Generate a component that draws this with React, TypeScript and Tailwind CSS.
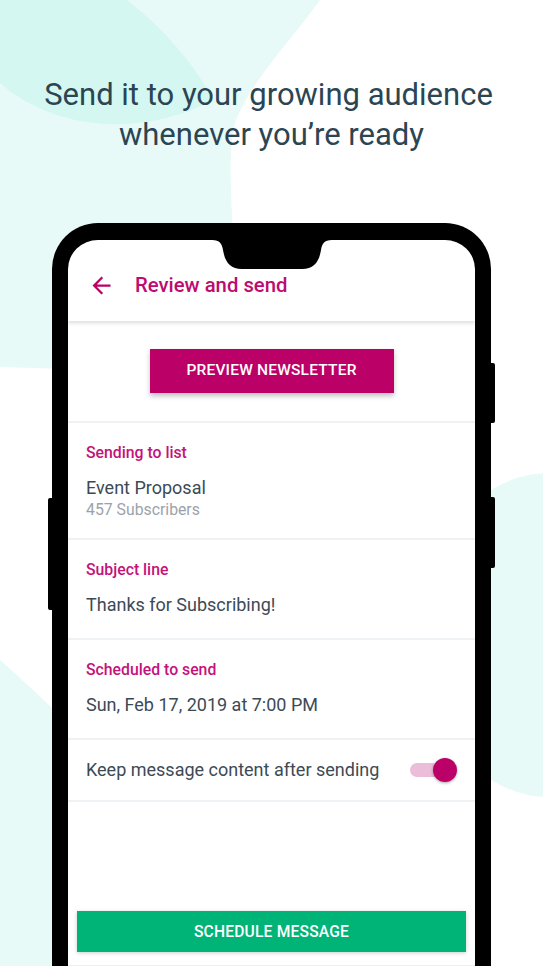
const PINK = "#bb0068";

function Section({ label, value, sub }: { label: string; value: string; sub?: string }) {
  return (
    <div className={`border-b-2 border-[#eef2f5] px-[18px] pt-[20px] ${sub ? "pb-[18px]" : "pb-[21px]"}`}>
      <p className="text-[15.8px] font-medium leading-[20px] text-[#c4127a]">{label}</p>
      <p className="mt-[13px] text-[18px] leading-[24px] text-[#3c4a55]">{value}</p>
      {sub ? <p className="text-[15.8px] leading-[20px] text-[#9aa3ab]">{sub}</p> : null}
    </div>
  );
}

export default function App() {
  return (
    <div
      className="relative h-[966px] w-[543px] overflow-hidden bg-white"
      style={{ fontFamily: "Roboto, 'Noto Sans', sans-serif" }}
    >
      {/* background blobs */}
      <svg className="absolute left-0 top-0" width="543" height="966" viewBox="0 0 543 966">
        <path d="M0 0 H320 C290 42 252 80 236 120 C226 150 232 220 238 300 L240 374 L0 367 Z" fill="#e7faf8" />
        <path d="M0 0 H127 C165 30 195 65 213 100 C180 118 140 126 105 124 C60 121 25 105 0 83 Z" fill="#d5f7f1" />
        <rect x="440" y="473" width="300" height="324" rx="110" fill="#e7faf8" />
        <path d="M0 660 C20 678 40 696 60 716 L60 966 L0 966 Z" fill="#e7faf8" />
      </svg>

      <h1 className="relative pt-[75px] text-center text-[31px] leading-[40px] text-[#2b4553]">
        <span className="mr-[6px]">Send it to your growing audience</span>
        <br />
        whenever you’re ready
      </h1>

      {/* phone */}
      <div className="relative ml-[52px] mt-[68px] h-[760px] w-[439px] rounded-t-[46px] border-x-[16px] border-t-[17px] border-black bg-white">
        {/* side buttons */}
        <div className="absolute left-[-20px] top-[258px] h-[112px] w-[5px] rounded-l-[2px] bg-black" />
        <div className="absolute right-[-20px] top-[123px] h-[60px] w-[5px] rounded-r-[2px] bg-black" />
        <div className="absolute right-[-20px] top-[257px] h-[71px] w-[5px] rounded-r-[2px] bg-black" />

        {/* notch */}
        <svg className="absolute left-1/2 top-0 z-10 -translate-x-1/2" width="120" height="29" viewBox="0 0 120 29">
          <path d="M0 0 H120 C112 0 110 4 109 10 C107 22 102 29 90 29 H30 C18 29 13 22 11 10 C10 4 8 0 0 0 Z" fill="#000" />
        </svg>

        <div className="flex h-full flex-col overflow-hidden rounded-t-[30px]">
          {/* app bar */}
          <div className="flex h-[81px] items-center pl-[20px] pt-[9px] shadow-[0_2px_4px_rgba(0,0,0,0.14)]">
            <svg width="27" height="27" viewBox="0 0 24 24">
              <path d="M20 11H7.83l5.59-5.59L12 4l-8 8 8 8 1.41-1.41L7.83 13H20v-2z" fill={PINK} />
            </svg>
            <span className="ml-[20px] text-[20.3px] font-medium text-[#bd0b70]">Review and send</span>
          </div>

          <div className="border-b-2 border-[#eef2f5] pb-[28px] pt-[28px]">
            <button className="mx-auto flex h-[44px] w-[244px] items-center justify-center bg-[#bb0068] text-[15.5px] font-medium tracking-[0.2px] text-white shadow-[0_3px_5px_rgba(0,0,0,0.25)]">
              PREVIEW NEWSLETTER
            </button>
          </div>

          <Section label="Sending to list" value="Event Proposal" sub="457 Subscribers" />
          <Section label="Subject line" value="Thanks for Subscribing!" />
          <Section label="Scheduled to send" value="Sun, Feb 17, 2019 at 7:00 PM" />

          <div className="flex h-[62px] items-center justify-between border-b-2 border-[#eef2f5] pl-[18px] pr-[18px]">
            <span className="text-[18px] leading-[24px] text-[#3c4a55]">Keep message content after sending</span>
            <div className="relative h-[24px] w-[47px]">
              <div className="absolute left-0 top-[5px] h-[14px] w-[38px] rounded-full bg-[#ecbdd8]" />
              <div className="absolute right-0 top-0 h-[24px] w-[24px] rounded-full bg-[#bb0068] shadow-[0_1px_3px_rgba(0,0,0,0.35)]" />
            </div>
          </div>

          <button className="mx-[9px] mt-[109px] flex h-[41px] items-center justify-center bg-[#00b377] pt-[3px] text-[15.6px] font-medium tracking-[0.2px] text-white shadow-[0_1px_4px_rgba(0,0,0,0.2)]">
            SCHEDULE MESSAGE
          </button>
          <div className="mt-[13px] border-t-2 border-[#eceff1]" />
        </div>
      </div>
    </div>
  );
}
